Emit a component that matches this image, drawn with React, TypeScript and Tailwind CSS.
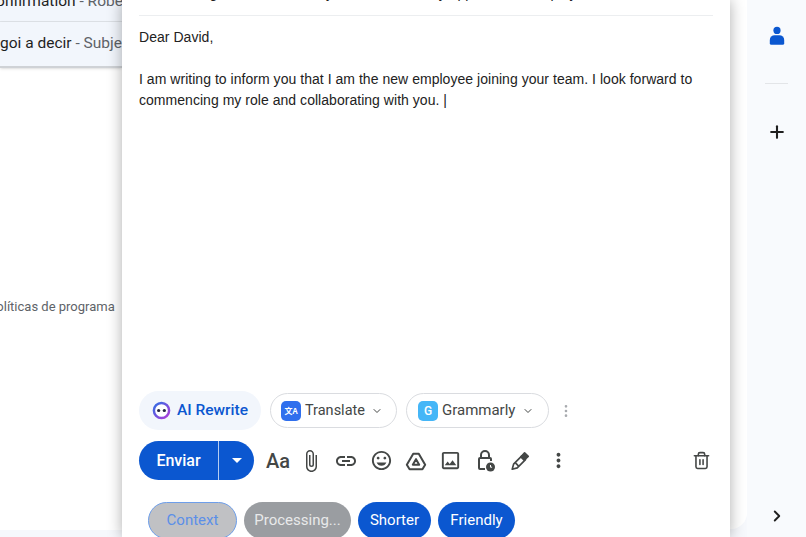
import React from 'react';
import { ChevronDown, ChevronRight, EllipsisVertical, Plus, Trash2 } from 'lucide-react';
import {
  MdAttachFile,
  MdLink,
  MdMoreVert,
  MdOutlineInsertEmoticon,
  MdOutlineInsertPhoto,
} from 'react-icons/md';

const font = "font-['Roboto',sans-serif]";

const DriveIcon = () => (
  <svg viewBox="0 0 24 24" className="h-[22px] w-[22px]" fill="none" stroke="#444746" strokeWidth="2.2" strokeLinejoin="round">
    <path d="M9 4h6l7 12-3 5H5l-3-5z" />
    <path d="M12 10 8.5 16h7z" />
  </svg>
);

const LockClock = () => (
  <svg viewBox="0 0 24 24" className="h-[24px] w-[24px]" fill="none" stroke="#444746" strokeWidth="2">
    <path d="M8 9V6a4 4 0 0 1 8 0v3" />
    <path d="M12 20H7a1 1 0 0 1-1-1V10a1 1 0 0 1 1-1h10a1 1 0 0 1 1 1v2" />
    <circle cx="17.5" cy="18" r="4.5" fill="#444746" stroke="none" />
    <path d="M17.5 16v2.2h1.6" stroke="#fff" strokeWidth="1" />
  </svg>
);

const Pen = () => (
  <svg viewBox="0 0 24 24" className="h-[22px] w-[22px]" fill="none" stroke="#444746" strokeWidth="1.8" strokeLinejoin="round">
    <path d="M3.5 21l1.5-5.5L14 6.5l4 4-9 9z" />
    <path d="M13 7.500l4-4.500 4 4-4.500 4z" fill="#444746" />
    <path d="M7 14l3.500 3.500" />
  </svg>
);

const AiFace = () => (
  <svg viewBox="0 0 20 20" className="h-[19px] w-[19px]">
    <defs>
      <linearGradient id="ai-ring" x1="0" y1="0" x2="1" y2="1">
        <stop offset="0" stopColor="#2f6fe4" />
        <stop offset="1" stopColor="#b23ad8" />
      </linearGradient>
    </defs>
    <circle cx="10" cy="10" r="8" fill="#fff" stroke="url(#ai-ring)" strokeWidth="2.6" />
    <circle cx="7" cy="10" r="1.7" fill="#23233f" />
    <circle cx="13" cy="10" r="1.7" fill="#23233f" />
  </svg>
);

const TranslateBadge = () => (
  <div className="flex h-5 w-5 items-center justify-center rounded-[5px] bg-[#2f6fed] text-[8px] leading-[8px] font-bold text-white">
    <span className="font-['Noto_Sans_CJK_SC',sans-serif]">文A</span>
  </div>
);

const GrammarlyBadge = () => (
  <div className="flex h-5 w-5 items-center justify-center rounded-[5px] bg-[#45b6f7] text-[12px] font-medium text-white">G</div>
);

const Pill = ({ children, className }: { children: React.ReactNode; className: string }) => (
  <div className={`flex items-center rounded-full ${className}`}>{children}</div>
);

export default function App() {
  return (
    <div className={`flex h-[537px] w-[806px] overflow-hidden bg-[#f6f8fc] ${font}`}>
      {/* mail list behind the compose window */}
      <div className="flex h-[530px] w-[122px] shrink-0 flex-col bg-white text-[15.5px]">
        <div className="h-[22px] overflow-hidden whitespace-nowrap border-b border-[#dfe3e8] bg-[#f2f6fc]">
          <div className="-mt-[10px] -ml-[14px] text-[#1f1f1f]">
            Confirmation <span className="text-[#5e6368]">- Robert</span>
          </div>
        </div>
        <div className="flex h-[46px] items-center overflow-hidden whitespace-nowrap border-b-2 border-[#cfd2d6] bg-[#f2f6fc] shadow-sm">
          <div className="text-[#1f1f1f]">
            goi a decir <span className="text-[#5e6368]">- Subject</span>
          </div>
        </div>
        <div className="mt-[229px] overflow-hidden whitespace-nowrap text-[13px] text-[#5e6368]">
          <span className="-ml-[11px] inline-block">políticas de programa</span>
        </div>
      </div>

      {/* compose window */}
      <div className="relative z-10 flex w-[608px] shrink-0 flex-col bg-white px-[17px] text-[14px] tracking-[0.035px] text-[#222] shadow-[0_0_14px_rgba(0,0,0,0.32)] font-['Liberation_Sans',sans-serif]">
        <div className="h-[16px] overflow-hidden border-b border-[#eceef0]">
          <div className="-mt-[17px] whitespace-nowrap">New starting date notice for my role at start of my appointment employ</div>
        </div>
        <div className="pt-[11px] leading-[21px]">Dear David,</div>
        <div className="mt-[21px] w-[570px] leading-[21px]">
          I am writing to inform you that I am the new employee joining your team. I look forward to commencing my role and collaborating with you. <span className="font-light">|</span>
        </div>

        <div className="mt-auto flex flex-col">
          <div className={`flex items-center tracking-normal ${font}`}>
            <Pill className="h-[39px] bg-[#f2f6fc] px-[13px] text-[15.5px] font-medium text-[#0b57d0]">
              <span className="mr-[6px]"><AiFace /></span>AI Rewrite
            </Pill>
            <Pill className="ml-[9px] h-[35px] border border-[#dadce0] pr-[13px] pl-[10px] text-[14.5px] text-[#444746]">
              <span className="mr-[4px]"><TranslateBadge /></span>Translate
              <ChevronDown className="ml-[6px] h-3 w-3" />
            </Pill>
            <Pill className="ml-[9px] h-[35px] border border-[#dadce0] pr-[14px] pl-[11px] text-[15px] text-[#444746]">
              <span className="mr-[4px]"><GrammarlyBadge /></span>Grammarly
              <ChevronDown className="ml-[7px] h-3 w-3" />
            </Pill>
            <EllipsisVertical className="ml-[9px] h-4 w-4 text-[#a8abaf]" />
          </div>

          <div className={`mt-[11px] flex items-center tracking-normal text-[#444746] ${font}`}>
            <div className="flex h-[39px] w-[115px] items-center rounded-full bg-[#0b57d0] text-white">
              <div className="flex h-full w-[80px] items-center justify-center border-r border-white/70 text-[16px] font-medium">Enviar</div>
              <div className="flex flex-1 justify-center">
                <div className="h-0 w-0 border-x-[5px] border-t-[5px] border-x-transparent border-t-white" />
              </div>
            </div>
            <span className="ml-[12px] text-[20px] leading-none font-medium">Aa</span>
            <MdAttachFile className="ml-[9px] h-[24px] w-[24px]" />
            <MdLink className="ml-[11px] h-[24px] w-[24px]" />
            <MdOutlineInsertEmoticon className="ml-[12px] h-[23px] w-[23px]" />
            <span className="ml-[12px]"><DriveIcon /></span>
            <MdOutlineInsertPhoto className="ml-[12px] h-[23px] w-[23px]" />
            <span className="ml-[11px]"><LockClock /></span>
            <span className="ml-[12px]"><Pen /></span>
            <MdMoreVert className="ml-[16px] h-[23px] w-[23px]" />
            <Trash2 className="mr-[2px] ml-auto h-[19px] w-[19px]" strokeWidth={2} />
          </div>

          <div className={`mt-[22px] mb-[-2px] flex items-center gap-[7px] text-[15px] tracking-normal ${font}`}>
            <div className="ml-[9px] flex h-[37px] w-[89px] items-center justify-center rounded-full border border-[#6d9eea] bg-[#c0c1c4] text-[#5b8fe8]">Context</div>
            <div className="flex h-[37px] w-[107px] items-center justify-center rounded-full bg-[#9a9da1] text-[#e8e9ea]">Processing...</div>
            <div className="flex h-[37px] w-[73px] items-center justify-center rounded-full bg-[#0b57d0] text-white">Shorter</div>
            <div className="flex h-[37px] w-[77px] items-center justify-center rounded-full bg-[#0b57d0] text-white">Friendly</div>
          </div>
        </div>
      </div>

      {/* gap right of the compose window */}
      <div className="h-[529px] w-[17px] shrink-0 rounded-br-[16px] bg-white" />

      {/* side panel */}
      <div className="flex w-[59px] shrink-0 flex-col items-center bg-[#f8fafd] text-[#1f1f1f]">
        <svg viewBox="0 0 20 24" className="mt-[26px] h-[20px] w-[16px]" fill="#0b57d0">
          <circle cx="10" cy="5" r="4.500" />
          <path d="M1 21v-4a6 6 0 0 1 6-6h6a6 6 0 0 1 6 6v4a2 2 0 0 1-2 2H3a2 2 0 0 1-2-2z" />
        </svg>
        <div className="mt-[37px] h-px w-[23px] bg-[#e3e5e8]" />
        <Plus className="mt-[38px] h-[20px] w-[20px]" strokeWidth={2.5} />
        <ChevronRight className="mt-auto mb-[12px] h-[18px] w-[18px]" strokeWidth={2.5} />
      </div>
    </div>
  );
}
